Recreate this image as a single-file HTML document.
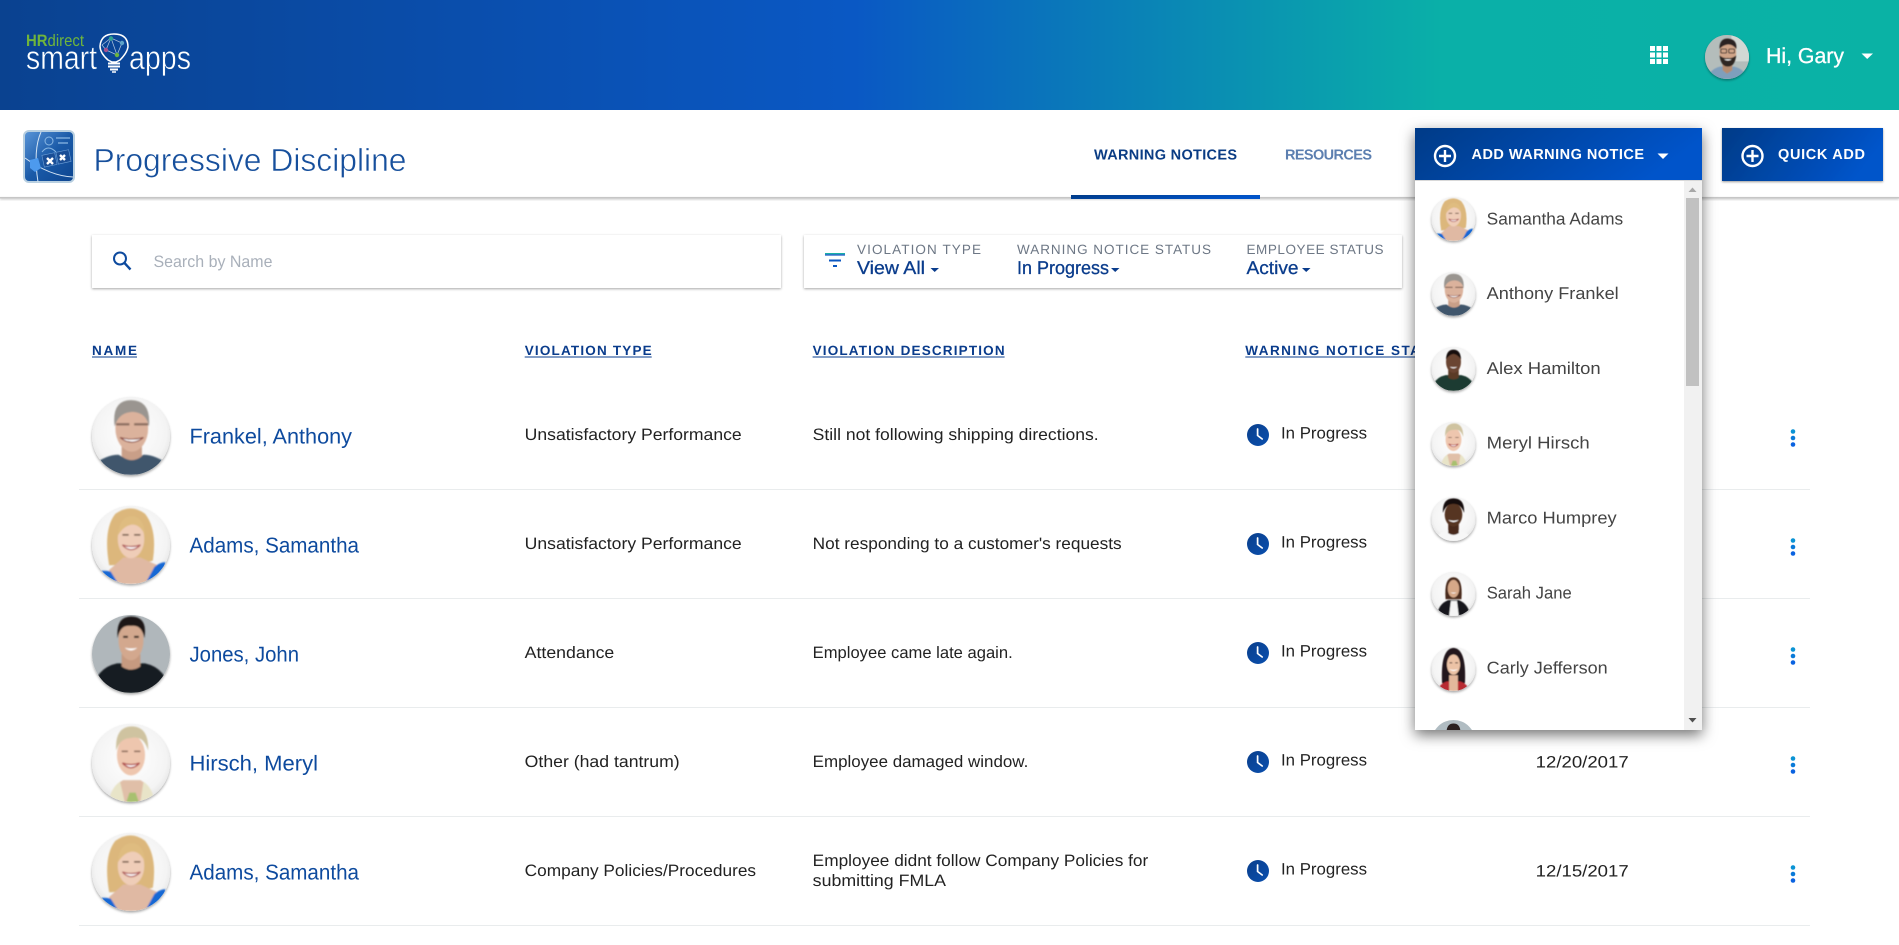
<!DOCTYPE html>
<html lang="en"><head><meta charset="utf-8"><title>Progressive Discipline</title>
<style>
html,body{margin:0;padding:0;background:#fff;width:1899px;height:945px;overflow:hidden}
svg{display:block}
text{font-family:"Liberation Sans",sans-serif;text-rendering:geometricPrecision}
.nm{font-size:21.5px;fill:#0d4a9e}
.td{font-size:16.5px;fill:#222}
.hd{font-size:13.5px;font-weight:bold;fill:#0a3c8c}
.fl{font-size:13.5px;fill:#6d7785}
.fv{font-size:18.5px;fill:#0a3c8c;stroke:#0a3c8c;stroke-width:.3px}
.dd{font-size:17px;fill:#444}
.btn{font-size:14.5px;font-weight:bold;fill:#fff}
</style></head><body>
<svg xmlns="http://www.w3.org/2000/svg" width="1899" height="945" viewBox="0 0 1899 945">
<defs>
<linearGradient id="hdr" x1="0" x2="1" y1="0" y2="0"><stop offset="0" stop-color="#0a4290"/><stop offset=".45" stop-color="#0a58c4"/><stop offset=".76" stop-color="#0ab0a8"/><stop offset="1" stop-color="#0ab2a5"/></linearGradient>
<linearGradient id="btn" x1="0" x2="1" y1="0" y2=".25"><stop offset="0" stop-color="#003b87"/><stop offset="1" stop-color="#0054ca"/></linearGradient>
<linearGradient id="clk" x1="0" x2="1" y1="0" y2="1"><stop offset="0" stop-color="#0a3f8c"/><stop offset="1" stop-color="#0a4fae"/></linearGradient>
<linearGradient id="app" x1="0" x2="1" y1="0" y2="1"><stop offset="0" stop-color="#5b96d8"/><stop offset=".5" stop-color="#1a5aa8"/><stop offset="1" stop-color="#0d4590"/></linearGradient>
<radialGradient id="wbg" cx=".5" cy=".45" r=".7"><stop offset="0" stop-color="#fff"/><stop offset=".65" stop-color="#f4f4f4"/><stop offset="1" stop-color="#cfcfcf"/></radialGradient>
<filter id="sh" x="-10%" y="-20%" width="120%" height="150%"><feDropShadow dx="0" dy="1" stdDeviation="1.3" flood-color="#000" flood-opacity=".35"/></filter>
<filter id="shb" x="-10%" y="-20%" width="120%" height="150%"><feDropShadow dx="0" dy="1" stdDeviation="1" flood-color="#000" flood-opacity=".4"/></filter>
<filter id="shm" x="-15%" y="-15%" width="130%" height="130%"><feDropShadow dx="0" dy="5" stdDeviation="7" flood-color="#000" flood-opacity=".55"/></filter>
<filter id="shl" x="-5%" y="-50%" width="110%" height="300%"><feDropShadow dx="0" dy="1" stdDeviation="1" flood-color="#000" flood-opacity=".25"/></filter>
<filter id="bl" x="-10%" y="-10%" width="120%" height="120%"><feGaussianBlur stdDeviation="1"/></filter>
<filter id="av" x="-20%" y="-20%" width="140%" height="150%"><feDropShadow dx="0" dy="1.5" stdDeviation="1.4" flood-color="#000" flood-opacity=".35"/></filter>
<clipPath id="c"><circle cx="50" cy="50" r="50"/></clipPath>
<clipPath id="ddclip"><rect x="1415" y="180" width="269" height="550"/></clipPath>

<symbol id="anthony" viewBox="0 0 100 100"><g clip-path="url(#c)"><rect width="100" height="100" fill="url(#wbg)"/><g filter="url(#bl)"><path d="M0 100V88Q18 74 34 74Q50 84 66 74Q82 74 100 88V100Z" fill="#3f566c"/><path d="M38 62H64V76Q51 86 38 76Z" fill="#c99f88"/><ellipse cx="51" cy="40" rx="21" ry="30" fill="#dbb29c"/><path d="M29 38Q25 4 50 4Q76 4 73 38Q70 20 52 19Q34 20 29 38Z" fill="#9a9590"/><path d="M31 35H48M54 35H72" stroke="#8b6d5e" stroke-width="3"/><path d="M36 52Q51 64 66 52Q51 56 36 52Z" fill="#fff" stroke="#8a4a40" stroke-width="1.400"/></g></g></symbol>

<symbol id="samantha" viewBox="0 0 100 100"><g clip-path="url(#c)"><rect width="100" height="100" fill="url(#wbg)"/><g filter="url(#bl)"><path d="M22 76Q14 30 30 10Q50-4 68 10Q84 30 78 70Q60 76 50 66Q40 76 22 76Z" fill="#dcb77c"/><path d="M22 100V82L40 66H62L84 76V100Z" fill="#e0b9a3"/><path d="M6 84Q16 82 24 84L34 100H6ZM94 72Q88 72 80 78L68 100H94Z" fill="#1468d4"/><ellipse cx="50" cy="42" rx="17" ry="25" fill="#efcdb8"/><path d="M33 38Q35 13 52 13Q67 15 68 38Q62 23 50 24Q40 26 33 38Z" fill="#dfbc80"/><path d="M39 50Q50 62 62 50Q50 54 39 50Z" fill="#fff" stroke="#b05a5a" stroke-width="1.600"/><path d="M39 37h8M54 37h8" stroke="#6a5040" stroke-width="2"/></g></g></symbol>

<symbol id="john" viewBox="0 0 100 100"><g clip-path="url(#c)"><rect width="100" height="100" fill="#b0b7bb"/><g filter="url(#bl)"><path d="M0 100Q4 68 32 62L68 62Q96 68 100 100Z" fill="#141c24"/><path d="M38 50H62V66Q50 74 38 66Z" fill="#c69a80"/><ellipse cx="50" cy="32" rx="16" ry="26" fill="#d3a88e"/><path d="M33 30Q30 2 50 2Q72 2 67 30Q64 12 50 14Q36 12 33 30Z" fill="#1f1714"/><path d="M42 42Q50 49 58 42Q50 44 42 42Z" fill="#fff"/><path d="M40 28h6M54 28h6" stroke="#2a1c18" stroke-width="2.500"/></g></g></symbol>

<symbol id="meryl" viewBox="0 0 100 100"><g clip-path="url(#c)"><rect width="100" height="100" fill="url(#wbg)"/><g filter="url(#bl)"><path d="M22 100Q24 80 40 72H62Q76 80 80 100Z" fill="#e0bfa8"/><path d="M22 100Q24 82 36 74L42 100ZM80 100Q78 82 66 74L62 100Z" fill="#e8e4c8"/><path d="M44 100L48 88H56L60 100Z" fill="#a8c070"/><ellipse cx="50" cy="40" rx="18" ry="26" fill="#eec6ae"/><path d="M31 34Q29 3 52 3Q73 4 72 34Q66 14 50 18Q36 18 31 34Z" fill="#cfc3a0"/><path d="M39 50Q50 62 61 50Q50 54 39 50Z" fill="#fff" stroke="#b04a4a" stroke-width="1.800"/><path d="M38 35h8M54 35h8" stroke="#8a6a5a" stroke-width="2"/></g></g></symbol>

<symbol id="alex" viewBox="0 0 100 100"><g clip-path="url(#c)"><rect width="100" height="100" fill="url(#wbg)"/><g filter="url(#bl)"><path d="M0 100Q4 70 32 64L68 64Q96 70 100 100Z" fill="#1c3a30"/><path d="M38 52H62V70Q50 78 38 70Z" fill="#5a3a28"/><ellipse cx="50" cy="34" rx="17" ry="25" fill="#6a4530"/><path d="M33 28Q34 6 50 6Q66 6 67 28Q58 16 50 16Q42 16 33 28Z" fill="#151010"/><path d="M41 45Q50 52 59 45Q50 47 41 45Z" fill="#fff"/></g></g></symbol>

<symbol id="marco" viewBox="0 0 100 100"><g clip-path="url(#c)"><rect width="100" height="100" fill="url(#wbg)"/><g filter="url(#bl)"><path d="M8 100Q14 80 36 76L64 76Q86 80 92 100Z" fill="#f7f7f7"/><path d="M38 58H62V82Q50 90 38 82Z" fill="#4a2c1c"/><ellipse cx="50" cy="40" rx="20" ry="27" fill="#563524"/><path d="M26 36Q24 3 50 3Q76 3 74 36Q66 14 50 16Q34 14 26 36Z" fill="#17100c"/><path d="M38 52Q50 62 62 52Q50 56 38 52Z" fill="#fff"/></g></g></symbol>

<symbol id="sarah" viewBox="0 0 100 100"><g clip-path="url(#c)"><rect width="100" height="100" fill="url(#wbg)"/><g filter="url(#bl)"><path d="M32 62Q28 12 50 12Q72 12 68 62Z" fill="#4a2c1e"/><path d="M12 100Q16 72 38 64L62 64Q84 72 88 100Z" fill="#16181c"/><path d="M40 100L44 66H58L62 100Z" fill="#f4f4f4"/><ellipse cx="50" cy="38" rx="13" ry="20" fill="#d6a888"/><path d="M43 46Q50 52 57 46Q50 48 43 46Z" fill="#fff"/></g></g></symbol>

<symbol id="carly" viewBox="0 0 100 100"><g clip-path="url(#c)"><rect width="100" height="100" fill="url(#wbg)"/><g filter="url(#bl)"><path d="M24 82Q20 4 50 2Q80 4 76 82Q50 92 24 82Z" fill="#21171a"/><path d="M12 100Q20 82 36 78L64 78Q80 82 88 100Z" fill="#b82a30"/><path d="M40 100V64H60V100Z" fill="#e3b89c"/><ellipse cx="50" cy="40" rx="15" ry="23" fill="#ecc3a6"/><path d="M40 50Q50 59 60 50Q50 54 40 50Z" fill="#fff"/><path d="M41 36h6M54 36h6" stroke="#3a2420" stroke-width="2"/></g></g></symbol>

<symbol id="gary" viewBox="0 0 100 100"><g clip-path="url(#c)"><rect width="100" height="100" fill="#b4bdbb"/><rect x="60" width="40" height="60" fill="#d2d8d4"/><g filter="url(#bl)"><path d="M6 100Q10 78 34 72L66 72Q92 78 94 100Z" fill="#7f9fbc"/><path d="M40 60H62V80L50 88L40 80Z" fill="#b58c70"/><ellipse cx="52" cy="40" rx="19" ry="26" fill="#d0a488"/><path d="M33 46Q36 72 52 72Q68 72 71 46Q62 54 52 52Q42 54 33 46Z" fill="#2f2622"/><path d="M33 32Q32 8 52 8Q74 10 71 32Q62 20 50 22Q40 24 33 32Z" fill="#2b2320"/><rect x="36" y="32" width="13" height="9" rx="2" fill="none" stroke="#1c1c1c" stroke-width="2"/><rect x="54" y="32" width="13" height="9" rx="2" fill="none" stroke="#1c1c1c" stroke-width="2"/><path d="M43 55Q52 61 61 55Z" fill="#fff"/></g></g></symbol>

<symbol id="partial" viewBox="0 0 100 100"><g clip-path="url(#c)"><rect width="100" height="100" fill="#b0bcc2"/><path d="M34 30Q34 8 50 8Q66 8 66 30Z" fill="#2a2020"/></g></symbol>

<g id="clock"><circle cx="0" cy="0" r="11" fill="url(#clk)"/><path d="M-.4-6V.5L4.200 4" fill="none" stroke="#fff" stroke-width="1.700" stroke-linecap="round"/></g>
<g id="more"><circle cx="0" cy="-6.500" r="2.300" fill="#0a93d4"/><circle cx="0" cy="0" r="2.300" fill="#0a7ad8"/><circle cx="0" cy="6.500" r="2.300" fill="#0a62e0"/></g>
<g id="plus"><circle cx="0" cy="0" r="10" fill="none" stroke="#fff" stroke-width="2.400"/><path d="M-6 0H6M0-6V6" stroke="#fff" stroke-width="2.400"/></g>
<circle id="avs" cx="0" cy="0" r="39" fill="#eee" filter="url(#av)"/>
<circle id="avsm" cx="0" cy="0" r="22" fill="#eee" filter="url(#av)"/>
</defs>

<!-- Header -->
<rect width="1899" height="110" fill="url(#hdr)"/>
<text x="26" y="46" font-size="16.500" fill="#6fb53c" textLength="58" lengthAdjust="spacingAndGlyphs"><tspan font-weight="bold">HR</tspan>direct</text>
<text x="26" y="69" font-size="33" fill="#fff" stroke="#0a4a9c" stroke-width=".5" textLength="71" lengthAdjust="spacingAndGlyphs">smart</text>
<text x="129" y="69" font-size="33" fill="#fff" stroke="#0a4a9c" stroke-width=".5" textLength="62" lengthAdjust="spacingAndGlyphs">apps</text>
<g fill="none" stroke="#fff">
<path d="M108 60Q100 53 100 46Q101 34 114 34Q128 34 128 47Q127 53 120 60L116 62H112Z" stroke-width="1.500"/>
<path d="M102 45L111 38L122 43L117 55L106 50ZM111 38L106 50M111 38L117 55" stroke-width=".7" stroke-opacity=".7"/>
<path d="M108 63.500H120M108 66.500H120M110 69.500H118" stroke-width="2"/>
<path d="M112 72H116" stroke-width="1.500"/>
</g>
<circle cx="111" cy="38.500" r="2.200" fill="#2fa68f"/><circle cx="122" cy="43" r="2.200" fill="#5da3c9"/><circle cx="106" cy="50" r="2.200" fill="#a9508d"/><circle cx="117" cy="55" r="2.200" fill="#6cb33f"/>

<g fill="#fff"><rect x="1650" y="46" width="5" height="5"/><rect x="1656.500" y="46" width="5" height="5"/><rect x="1663" y="46" width="5" height="5"/><rect x="1650" y="52.500" width="5" height="5"/><rect x="1656.500" y="52.500" width="5" height="5"/><rect x="1663" y="52.500" width="5" height="5"/><rect x="1650" y="59" width="5" height="5"/><rect x="1656.500" y="59" width="5" height="5"/><rect x="1663" y="59" width="5" height="5"/></g>
<circle cx="1727" cy="57" r="22" fill="#aaa" filter="url(#av)"/>
<use href="#gary" x="1705" y="35" width="44" height="44"/>
<text x="1766" y="63" font-size="21.500" fill="#fff" stroke="#fff" stroke-width=".3" textLength="78" lengthAdjust="spacingAndGlyphs">Hi, Gary</text>
<path d="M1861.500 53.500H1873L1867.200 59Z" fill="#fff"/>

<!-- Sub header -->
<rect x="0" y="197" width="1899" height="1.500" fill="#c6c6c6" filter="url(#shl)"/>
<rect x="24" y="131" width="50" height="51" rx="5" fill="url(#app)" stroke="#b8cfe0" stroke-width="2"/>
<path d="M41 132Q33 150 38 182" fill="none" stroke="#d4e4f4" stroke-width="1"/>
<path d="M25 158Q50 176 73 177" fill="none" stroke="#d4e4f4" stroke-width="1"/>
<path d="M30 160L38 158L41 168L35 172L30 168Z" fill="#4d9aee"/>
<g fill="#1a4e96" stroke="#6da0d8" stroke-width=".6"><rect x="43" y="154" width="13" height="12" transform="rotate(-12 49 160)"/><rect x="57" y="151" width="13" height="12" transform="rotate(-12 63 157)"/></g>
<path d="M47 158L53 164M53 158L47 164M60 155L65 160M65 155L60 160" stroke="#fff" stroke-width="2.400"/>
<circle cx="49" cy="141" r="4" fill="none" stroke="#8ab8e4"/><path d="M42 152Q48 144 56 152" fill="none" stroke="#8ab8e4"/><path d="M56 138H70M58 143H68" stroke="#8ab8e4" stroke-width="1.200"/>
<text x="93.500" y="171" font-size="32" fill="#164f9c" stroke="#fff" stroke-width=".55" textLength="313" lengthAdjust="spacingAndGlyphs">Progressive Discipline</text>

<text x="1094" y="159.500" font-size="14.500" font-weight="bold" fill="#0a3c84" textLength="143" lengthAdjust="spacing">WARNING NOTICES</text>
<text x="1285" y="159.500" font-size="14.500" font-weight="bold" fill="#5c7fb0" textLength="87" lengthAdjust="spacing">RESOURCES</text>
<rect x="1071" y="195" width="189" height="4" fill="url(#btn)"/>

<!-- Search & filter -->
<rect x="92" y="235" width="689" height="53" fill="#fff" filter="url(#sh)"/>
<circle cx="120" cy="258.500" r="6" fill="none" stroke="#0d4a9e" stroke-width="2"/><path d="M124.500 263L130.500 269.500" stroke="#0d4a9e" stroke-width="2.400"/>
<text x="153.500" y="267" font-size="16.500" fill="#a9b0ba" textLength="119" lengthAdjust="spacingAndGlyphs">Search by Name</text>

<rect x="804" y="235" width="598" height="53" fill="#fff" filter="url(#sh)"/>
<rect x="825" y="253" width="20" height="1.300" fill="#18b0a8"/><rect x="825" y="254.300" width="20" height="1.300" fill="#0a56c0"/>
<rect x="829" y="259.500" width="12" height="2" fill="#0a56c0"/><rect x="833" y="265" width="4" height="2" fill="#0a56c0"/>
<text class="fl" x="857" y="254" textLength="124" lengthAdjust="spacing">VIOLATION TYPE</text>
<text class="fl" x="1017" y="254" textLength="194" lengthAdjust="spacing">WARNING NOTICE STATUS</text>
<text class="fl" x="1246.500" y="254" textLength="137" lengthAdjust="spacing">EMPLOYEE STATUS</text>
<text class="fv" x="857" y="274" textLength="68" lengthAdjust="spacingAndGlyphs">View All</text>
<text class="fv" x="1017" y="274" textLength="92" lengthAdjust="spacingAndGlyphs">In Progress</text>
<text class="fv" x="1246.500" y="274" textLength="52" lengthAdjust="spacingAndGlyphs">Active</text>
<path d="M930.500 268H939L934.700 272ZM1111 268H1119.500L1115.200 272ZM1302 268H1310.500L1306.200 272Z" fill="#0a3c8c"/>

<!-- Table head -->
<text class="hd" x="92" y="355" textLength="45" lengthAdjust="spacing">NAME</text><rect x="92" y="356.500" width="45" height="1" fill="#0a3c8c"/>
<text class="hd" x="524.700" y="355" textLength="127" lengthAdjust="spacing">VIOLATION TYPE</text><rect x="524.700" y="356.500" width="127" height="1" fill="#0a3c8c"/>
<text class="hd" x="812.600" y="355" textLength="192" lengthAdjust="spacing">VIOLATION DESCRIPTION</text><rect x="812.600" y="356.500" width="192" height="1" fill="#0a3c8c"/>
<text class="hd" x="1245.300" y="355" textLength="205" lengthAdjust="spacing">WARNING NOTICE STATUS</text><rect x="1245.300" y="356.500" width="205" height="1" fill="#0a3c8c"/>

<!-- Rows -->
<g fill="#e9eced"><rect x="79" y="489" width="1731" height="1"/><rect x="79" y="598" width="1731" height="1"/><rect x="79" y="707" width="1731" height="1"/><rect x="79" y="816" width="1731" height="1"/><rect x="79" y="925" width="1731" height="1"/></g>

<use href="#avs" x="131" y="436"/><use href="#anthony" x="92" y="397" width="78" height="78"/>
<use href="#avs" x="131" y="545"/><use href="#samantha" x="92" y="506" width="78" height="78"/>
<use href="#avs" x="131" y="654"/><use href="#john" x="92" y="615" width="78" height="78"/>
<use href="#avs" x="131" y="763"/><use href="#meryl" x="92" y="724" width="78" height="78"/>
<use href="#avs" x="131" y="872"/><use href="#samantha" x="92" y="833" width="78" height="78"/>

<text class="nm" x="189.500" y="443.500" textLength="162.500" lengthAdjust="spacingAndGlyphs">Frankel, Anthony</text>
<text class="nm" x="189.500" y="552.500" textLength="169.500" lengthAdjust="spacingAndGlyphs">Adams, Samantha</text>
<text class="nm" x="189.500" y="661.500" textLength="109.500" lengthAdjust="spacingAndGlyphs">Jones, John</text>
<text class="nm" x="189.500" y="770.500" textLength="128.500" lengthAdjust="spacingAndGlyphs">Hirsch, Meryl</text>
<text class="nm" x="189.500" y="879.500" textLength="169.500" lengthAdjust="spacingAndGlyphs">Adams, Samantha</text>

<text class="td" x="524.700" y="440" textLength="217" lengthAdjust="spacingAndGlyphs">Unsatisfactory Performance</text>
<text class="td" x="524.700" y="549" textLength="217" lengthAdjust="spacingAndGlyphs">Unsatisfactory Performance</text>
<text class="td" x="524.700" y="658" textLength="89.600" lengthAdjust="spacingAndGlyphs">Attendance</text>
<text class="td" x="524.700" y="767" textLength="155" lengthAdjust="spacingAndGlyphs">Other (had tantrum)</text>
<text class="td" x="524.700" y="876" textLength="231.400" lengthAdjust="spacingAndGlyphs">Company Policies/Procedures</text>

<text class="td" x="812.700" y="440" textLength="286" lengthAdjust="spacingAndGlyphs">Still not following shipping directions.</text>
<text class="td" x="812.700" y="549" textLength="309" lengthAdjust="spacingAndGlyphs">Not responding to a customer's requests</text>
<text class="td" x="812.700" y="658" textLength="200" lengthAdjust="spacingAndGlyphs">Employee came late again.</text>
<text class="td" x="812.700" y="767" textLength="215.600" lengthAdjust="spacingAndGlyphs">Employee damaged window.</text>
<text class="td" x="812.700" y="866" textLength="335.600" lengthAdjust="spacingAndGlyphs">Employee didnt follow Company Policies for</text>
<text class="td" x="812.700" y="886" textLength="133.300" lengthAdjust="spacingAndGlyphs">submitting FMLA</text>

<use href="#clock" x="1258" y="435"/><text class="td" x="1281" y="438.500" textLength="86" lengthAdjust="spacingAndGlyphs">In Progress</text>
<use href="#clock" x="1258" y="544"/><text class="td" x="1281" y="547.500" textLength="86" lengthAdjust="spacingAndGlyphs">In Progress</text>
<use href="#clock" x="1258" y="653"/><text class="td" x="1281" y="656.500" textLength="86" lengthAdjust="spacingAndGlyphs">In Progress</text>
<use href="#clock" x="1258" y="762"/><text class="td" x="1281" y="765.500" textLength="86" lengthAdjust="spacingAndGlyphs">In Progress</text>
<use href="#clock" x="1258" y="871"/><text class="td" x="1281" y="874.500" textLength="86" lengthAdjust="spacingAndGlyphs">In Progress</text>

<text class="td" x="1535.700" y="767.500" textLength="93" lengthAdjust="spacingAndGlyphs">12/20/2017</text>
<text class="td" x="1535.700" y="876.500" textLength="93" lengthAdjust="spacingAndGlyphs">12/15/2017</text>

<use href="#more" x="1793" y="438"/><use href="#more" x="1793" y="547"/><use href="#more" x="1793" y="656"/><use href="#more" x="1793" y="765"/><use href="#more" x="1793" y="874"/>

<!-- Quick add -->
<rect x="1722" y="128" width="161" height="53" fill="url(#btn)" filter="url(#shb)"/>
<use href="#plus" x="1752.500" y="156"/>
<text class="btn" x="1778" y="159" textLength="87" lengthAdjust="spacing">QUICK ADD</text>

<!-- Dropdown -->
<rect x="1415" y="128" width="287" height="602" fill="#fff" filter="url(#shm)"/>
<rect x="1415" y="128" width="287" height="52" fill="url(#btn)"/>
<rect x="1415" y="180" width="287" height="1" fill="#d8d8d8"/>
<use href="#plus" x="1445" y="156"/>
<text class="btn" x="1471.500" y="159" textLength="172.500" lengthAdjust="spacing">ADD WARNING NOTICE</text>
<path d="M1657.500 153.500H1668.500L1663 159Z" fill="#fff"/>

<rect x="1684" y="181" width="18" height="549" fill="#f1f1f1"/>
<rect x="1686" y="198" width="13" height="188" fill="#c1c1c1"/>
<path d="M1692.500 187.500L1696.500 192H1688.500Z" fill="#a8a8a8"/>
<path d="M1688.500 718H1696.500L1692.500 722.500Z" fill="#505050"/>

<use href="#avsm" x="1453.500" y="219"/><use href="#samantha" x="1431.500" y="197" width="44" height="44"/>
<use href="#avsm" x="1453.500" y="294"/><use href="#anthony" x="1431.500" y="272" width="44" height="44"/>
<use href="#avsm" x="1453.500" y="369"/><use href="#alex" x="1431.500" y="347" width="44" height="44"/>
<use href="#avsm" x="1453.500" y="444"/><use href="#meryl" x="1431.500" y="422" width="44" height="44"/>
<use href="#avsm" x="1453.500" y="519"/><use href="#marco" x="1431.500" y="497" width="44" height="44"/>
<use href="#avsm" x="1453.500" y="594"/><use href="#sarah" x="1431.500" y="572" width="44" height="44"/>
<use href="#avsm" x="1453.500" y="669"/><use href="#carly" x="1431.500" y="647" width="44" height="44"/>
<g clip-path="url(#ddclip)"><use href="#partial" x="1431.500" y="720" width="44" height="44"/></g>

<text class="dd" x="1486.700" y="224.500" textLength="136.500" lengthAdjust="spacingAndGlyphs">Samantha Adams</text>
<text class="dd" x="1486.700" y="299" textLength="132" lengthAdjust="spacingAndGlyphs">Anthony Frankel</text>
<text class="dd" x="1486.700" y="374" textLength="114" lengthAdjust="spacingAndGlyphs">Alex Hamilton</text>
<text class="dd" x="1486.700" y="448.500" textLength="103" lengthAdjust="spacingAndGlyphs">Meryl Hirsch</text>
<text class="dd" x="1486.700" y="523.500" textLength="130" lengthAdjust="spacingAndGlyphs">Marco Humprey</text>
<text class="dd" x="1486.700" y="598.500" textLength="85" lengthAdjust="spacingAndGlyphs">Sarah Jane</text>
<text class="dd" x="1486.700" y="673.500" textLength="121" lengthAdjust="spacingAndGlyphs">Carly Jefferson</text>
</svg>
</body></html>
